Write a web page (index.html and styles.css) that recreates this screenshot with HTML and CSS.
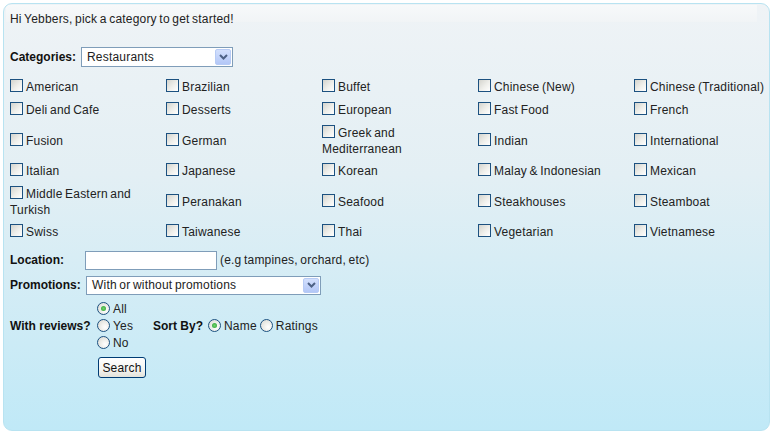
FILE: index.html
```html
<!DOCTYPE html>
<html>
<head>
<meta charset="utf-8">
<link rel="stylesheet" href="styles.css">
</head>
<body>
<div class="panel">
  <div class="greeting">Hi Yebbers, pick a category to get started!</div>

  <div class="row row-cat">
    <label class="lbl lbl-cat">Categories:</label>
    <div class="select sel-cat">
      <span class="sel-text">Restaurants</span>
      <span class="sel-btn"><svg width="9" height="6" viewBox="0 0 9 6"><path d="M1 1 L4.5 4.5 L8 1" fill="none" stroke="#4d6185" stroke-width="2"/></svg></span>
    </div>
  </div>

  <div class="cats">
    <div class="cell"><span class="cb"></span>American</div>
    <div class="cell"><span class="cb"></span>Brazilian</div>
    <div class="cell"><span class="cb"></span>Buffet</div>
    <div class="cell"><span class="cb"></span>Chinese (New)</div>
    <div class="cell last"><span class="cb"></span>Chinese (Traditional)</div>

    <div class="cell"><span class="cb"></span>Deli and Cafe</div>
    <div class="cell"><span class="cb"></span>Desserts</div>
    <div class="cell"><span class="cb"></span>European</div>
    <div class="cell"><span class="cb"></span>Fast Food</div>
    <div class="cell last"><span class="cb"></span>French</div>

    <div class="cell"><span class="cb"></span>Fusion</div>
    <div class="cell"><span class="cb"></span>German</div>
    <div class="cell"><span class="cb"></span>Greek and Mediterranean</div>
    <div class="cell"><span class="cb"></span>Indian</div>
    <div class="cell last"><span class="cb"></span>International</div>

    <div class="cell"><span class="cb"></span>Italian</div>
    <div class="cell"><span class="cb"></span>Japanese</div>
    <div class="cell"><span class="cb"></span>Korean</div>
    <div class="cell"><span class="cb"></span>Malay &amp; Indonesian</div>
    <div class="cell last"><span class="cb"></span>Mexican</div>

    <div class="cell"><span class="cb"></span>Middle Eastern and Turkish</div>
    <div class="cell"><span class="cb"></span>Peranakan</div>
    <div class="cell"><span class="cb"></span>Seafood</div>
    <div class="cell"><span class="cb"></span>Steakhouses</div>
    <div class="cell last"><span class="cb"></span>Steamboat</div>

    <div class="cell"><span class="cb"></span>Swiss</div>
    <div class="cell"><span class="cb"></span>Taiwanese</div>
    <div class="cell"><span class="cb"></span>Thai</div>
    <div class="cell"><span class="cb"></span>Vegetarian</div>
    <div class="cell last"><span class="cb"></span>Vietnamese</div>
  </div>

  <div class="row row-loc">
    <label class="lbl lbl-loc">Location:</label>
    <span class="input"></span>
    <span class="hint">(e.g tampines, orchard, etc)</span>
  </div>

  <div class="row row-promo">
    <label class="lbl lbl-promo">Promotions:</label>
    <div class="select sel-promo">
      <span class="sel-text">With or without promotions</span>
      <span class="sel-btn"><svg width="9" height="6" viewBox="0 0 9 6"><path d="M1 1 L4.5 4.5 L8 1" fill="none" stroke="#4d6185" stroke-width="2"/></svg></span>
    </div>
  </div>

  <div class="row row-rev">
    <label class="lbl lbl-rev">With reviews?</label>
    <div class="radios">
      <div class="opt"><span class="rb on"></span>All</div>
      <div class="opt"><span class="rb"></span>Yes</div>
      <div class="opt"><span class="rb"></span>No</div>
    </div>
    <label class="lbl lbl-sort">Sort By?</label>
    <div class="opt"><span class="rb on"></span>Name</div>
    <div class="opt opt-rat"><span class="rb"></span>Ratings</div>
  </div>

  <div class="row-btn">
    <button class="btn">Search</button>
  </div>
</div>
</body>
</html>
```

FILE: styles.css
```css
html, body {
  margin: 0;
  padding: 0;
  background: #ffffff;
}
body {
  font-family: "Liberation Sans", Arial, sans-serif;
  font-size: 12px;
  line-height: 16px;
  color: #222;
  letter-spacing: 0.2px;
  word-spacing: -1px;
}
.panel {
  margin: 3px;
  box-sizing: border-box;
  height: 428px;
  border: 1px solid #b8e3f1;
  border-radius: 9px;
  padding: 0 2px 0 6px;
  background:
    linear-gradient(#f7f9fa, #f1f4f6) no-repeat 2px 1px / calc(100% - 14px) 17px,
    linear-gradient(#eff3f6 0%, #e3eff4 40%, #c0e9f7 100%);
}
.greeting {
  padding-top: 7px;
  height: 16px;
}
.row {
  display: flex;
  align-items: center;
}
.lbl {
  font-weight: bold;
  letter-spacing: 0;
  word-spacing: 0;
  color: #111;
}
.row-cat {
  margin-top: 20px;
  height: 20px;
}
.lbl-cat { width: 71px; }
.select {
  box-sizing: border-box;
  display: flex;
  align-items: center;
  border: 1px solid #7f9db9;
  background: #fff;
  height: 20px;
  padding: 1px;
}
.sel-cat { width: 152px; }
.sel-promo { width: 235px; height: 19px; }
.sel-text {
  flex: 1;
  padding-left: 4px;
  white-space: nowrap;
}
.sel-btn {
  box-sizing: border-box;
  width: 16px;
  height: 100%;
  border: 1px solid #b7cbf5;
  border-radius: 2px;
  background: linear-gradient(#d3e0fd, #b3c7f7);
  display: flex;
  align-items: center;
  justify-content: center;
}
.cats {
  margin-top: 9px;
  display: grid;
  grid-template-columns: repeat(4, 156px) 1fr;
  grid-auto-rows: minmax(23px, auto);
  align-items: center;
}
.cell {
  display: block;
  padding: 3px 6px 3px 0;
  min-height: 17px;
  line-height: 16px;
}
.cell.last {
  white-space: nowrap;
  padding-right: 0;
}
.cb {
  display: inline-block;
  box-sizing: border-box;
  width: 13px;
  height: 13px;
  border: 1px solid #1c5180;
  background: linear-gradient(135deg, #d4d4ce 0%, #efefeb 55%, #ffffff 100%);
  margin-right: 3px;
  vertical-align: -1px;
}
.row-loc {
  margin-top: 6px;
  height: 20px;
}
.lbl-loc { width: 75px; }
.input {
  box-sizing: border-box;
  width: 132px;
  height: 19px;
  border: 1px solid #7f9db9;
  background: #fff;
}
.hint {
  margin-left: 3px;
}
.row-promo {
  margin-top: 5px;
  height: 20px;
}
.lbl-promo { width: 76px; }
.row-rev {
  margin-top: 5px;
}
.lbl-rev { width: 87px; }
.radios {
  width: 56px;
}
.opt {
  display: flex;
  align-items: center;
  height: 17px;
}
.rb {
  box-sizing: border-box;
  width: 13px;
  height: 13px;
  border: 1px solid #1c5180;
  border-radius: 50%;
  background: radial-gradient(circle at 65% 65%, #ffffff 0%, #f0f0ec 40%, #d6d6d0 100%);
  margin-right: 3px;
  display: flex;
  align-items: center;
  justify-content: center;
}
.rb.on::after {
  content: "";
  width: 5px;
  height: 5px;
  border-radius: 50%;
  background: radial-gradient(circle, #6ed46e 0%, #2e9e2e 100%);
}
.lbl-sort { width: 55px; }
.opt-rat { margin-left: 3px; }
.row-btn {
  margin-top: 6px;
  padding-left: 88px;
}
.btn {
  box-sizing: border-box;
  width: 48px;
  height: 21px;
  padding: 0;
  font-family: "Liberation Sans", Arial, sans-serif;
  font-size: 12px;
  letter-spacing: 0.2px;
  color: #111;
  border: 1px solid #003c74;
  border-radius: 3px;
  background: linear-gradient(#ffffff 0%, #f4f4f0 60%, #e3e2da 100%);
}
```
